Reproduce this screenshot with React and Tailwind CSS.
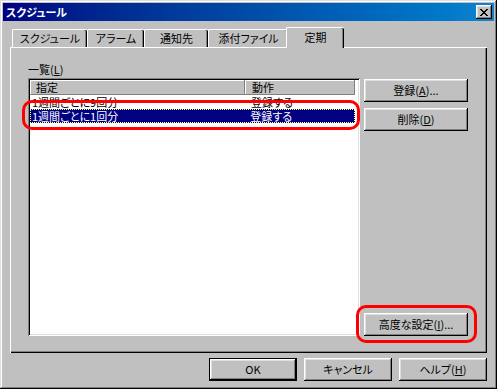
import React from 'react'

const RAISED = 'shadow-[inset_-1px_-1px_#000,inset_1px_1px_#fff,inset_-2px_-2px_#808080,inset_2px_2px_#dfdfdf]'
const SUNKEN = 'shadow-[inset_1px_1px_#808080,inset_-1px_-1px_#fff,inset_2px_2px_#000,inset_-2px_-2px_#dfdfdf]'

function Btn({ children, className = '', isDefault }) {
  if (isDefault) {
    return (
      <div className={`border border-black flex ${className}`}>
        <div className={`flex-1 flex items-center justify-center bg-[#c0c0c0] ${RAISED}`}>{children}</div>
      </div>
    )
  }
  return (
    <div className={`flex items-center justify-center bg-[#c0c0c0] ${RAISED} ${className}`}>{children}</div>
  )
}

function Tab({ label, w, active }) {
  if (active) {
    return (
      <div className={`${w} h-[21px] -ml-[2px] -mb-[1px] z-10 relative bg-[#c0c0c0] rounded-t-[2px] border-t border-l border-white shadow-[inset_-1px_0_#000,inset_-2px_0_#808080] flex items-start justify-center pt-[3px]`}>
        {label}
      </div>
    )
  }
  return (
    <div className={`${w} h-[18px] bg-[#c0c0c0] rounded-t-[2px] border-t border-l border-white shadow-[inset_-1px_0_#000,inset_-2px_0_#808080] flex items-start justify-center pt-[2px]`}>
      {label}
    </div>
  )
}

export default function App() {
  return (
    <div className="relative w-[497px] h-[389px] bg-[#c0c0c0] p-[3px] flex flex-col text-[11px] leading-[13px] text-black font-['Noto_Sans_CJK_JP',sans-serif] [font-feature-settings:'palt'] shadow-[inset_-1px_-1px_#000,inset_1px_1px_#dfdfdf,inset_-2px_-2px_#808080,inset_2px_2px_#fff]">
      {/* title bar */}
      <div className="h-[18px] flex items-center justify-between pl-[3px] pr-[2px] bg-gradient-to-r from-[#000080] to-[#1084d0]">
        <span className="text-white font-bold text-[11px]">スクジュール</span>
        <div className={`w-[16px] h-[14px] bg-[#c0c0c0] ${RAISED} flex items-center justify-center`}>
          <svg width="8" height="7" viewBox="0 0 8 7" shapeRendering="crispEdges">
            <path d="M0 0h2v1h1v1h2v-1h1v-1h2v1h-1v1h-1v1h-1v1h1v1h1v1h1v1h-2v-1h-1v-1h-2v1h-1v1h-2v-1h1v-1h1v-1h1v-1h-1v-1h-1v-1h-1z" fill="#000" />
          </svg>
        </div>
      </div>

      {/* tabs */}
      <div className="mt-[6px] ml-[9px] h-[20px] flex items-end">
        <Tab label="スクジュール" w="w-[75px]" />
        <Tab label="アラーム" w="w-[57px]" />
        <Tab label="通知先" w="w-[64px]" />
        <Tab label="添付ファイル" w="w-[80px]" />
        <Tab label="定期" w="w-[58px]" active />
      </div>

      {/* panel */}
      <div className="ml-[7px] w-[477px] h-[306px] shadow-[inset_1px_1px_#fff,inset_-1px_-1px_#000,inset_-2px_-2px_#808080] flex items-start pl-[18px] pt-[14px]">
        <div className="flex flex-col">
          <div className="h-[17px] pt-[2px]">一覧(<span className="underline">L</span>)</div>
          <div className={`w-[332px] h-[258px] bg-white p-[2px] ${SUNKEN}`}>
            <div className="flex h-[15px]">
              <div className="w-[215px] bg-[#c0c0c0] pl-[6px] shadow-[inset_-1px_-1px_#808080,inset_1px_1px_#fff] leading-[15px]">指定</div>
              <div className="w-[110px] bg-[#c0c0c0] pl-[7px] shadow-[inset_-1px_-1px_#808080,inset_1px_1px_#fff] leading-[15px]">動作</div>
            </div>
            <div className="flex h-[14px] w-[325px] leading-[13px] pt-[1px]">
              <div className="w-[215px] pl-[2px]">1週間ごとに9回分</div>
              <div className="w-[110px] pl-[6px]">登録する</div>
            </div>
            <div className="flex h-[14px] w-[325px] bg-[#000080] text-white border border-dotted border-[#ffff80]">
              <div className="w-[214px] pl-[1px] leading-[12px]">1週間ごとに1回分</div>
              <div className="w-[110px] pl-[6px] leading-[12px]">登録する</div>
            </div>
          </div>
        </div>
        <div className="ml-[4px] w-[104px] h-[275px] flex flex-col pt-[18px]">
          <Btn className="h-[23px]">登録(<span className="underline">A</span>)...</Btn>
          <Btn className="h-[23px] mt-[6px]">削除(<span className="underline">D</span>)</Btn>
          <Btn className="h-[23px] mt-auto">高度な設定(<span className="underline">I</span>)...</Btn>
        </div>
      </div>

      {/* bottom buttons */}
      <div className="mt-[5px] flex justify-end gap-[7px] pr-[7px]">
        <Btn isDefault className="w-[88px] h-[23px]">OK</Btn>
        <Btn className="w-[88px] h-[23px]">キャンセル</Btn>
        <Btn className="w-[88px] h-[23px]">ヘルプ(<span className="underline">H</span>)</Btn>
      </div>

      {/* red annotations */}
      <div className="absolute left-[22px] top-[100px] w-[338px] h-[30px] border-[3px] border-[#ff0000] rounded-[10px]" />
      <div className="absolute left-[356px] top-[305px] w-[121px] h-[38px] border-[3px] border-[#ff0000] rounded-[10px]" />
    </div>
  )
}
